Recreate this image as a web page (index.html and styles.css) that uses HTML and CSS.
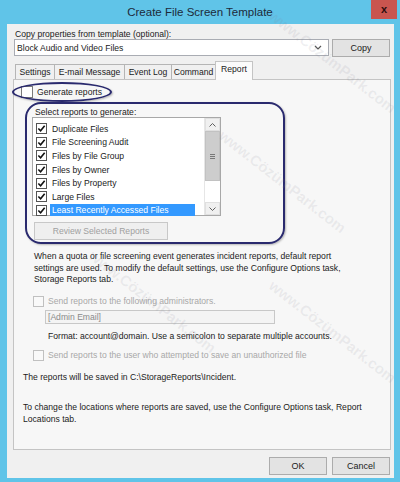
FILE: index.html
```html
<!DOCTYPE html>
<html>
<head>
<meta charset="utf-8">
<link rel="stylesheet" href="styles.css">
</head>
<body>
<div class="window">
  <div class="titlebar">
    <span></span>
    <span class="title">Create File Screen Template</span>
    <span class="close">x</span>
  </div>
  <div class="client">
    <div class="lbl">Copy properties from template (optional):</div>
    <div class="row-combo">
      <div class="combo">
        <span>Block Audio and Video Files</span>
        <svg class="chev" width="8" height="5" viewBox="0 0 8 5"><path d="M1 1 L4 4 L7 1" fill="none" stroke="#555" stroke-width="1.2"/></svg>
      </div>
      <div class="btn copy">Copy</div>
    </div>
    <div class="tabs">
      <div class="tab t1">Settings</div>
      <div class="tab t2">E-mail Message</div>
      <div class="tab t3">Event Log</div>
      <div class="tab t4">Command</div>
      <div class="tab sel">Report</div>
    </div>
    <div class="panel">
      <div class="chkrow gen">
        <span class="cb"></span><span>Generate reports</span>
      </div>
      <div class="group">
        <div class="glbl">Select reports to generate:</div>
        <div class="listbox">
          <div class="items">
            <div class="item"><span class="cb on"><svg viewBox="0 0 10 10"><path d="M1.5 5 L4 7.5 L8.5 2" fill="none" stroke="#111" stroke-width="1.8"/></svg></span><span class="it">Duplicate Files</span></div>
            <div class="item"><span class="cb on"><svg viewBox="0 0 10 10"><path d="M1.5 5 L4 7.5 L8.5 2" fill="none" stroke="#111" stroke-width="1.8"/></svg></span><span class="it">File Screening Audit</span></div>
            <div class="item"><span class="cb on"><svg viewBox="0 0 10 10"><path d="M1.5 5 L4 7.5 L8.5 2" fill="none" stroke="#111" stroke-width="1.8"/></svg></span><span class="it">Files by File Group</span></div>
            <div class="item"><span class="cb on"><svg viewBox="0 0 10 10"><path d="M1.5 5 L4 7.5 L8.5 2" fill="none" stroke="#111" stroke-width="1.8"/></svg></span><span class="it">Files by Owner</span></div>
            <div class="item"><span class="cb on"><svg viewBox="0 0 10 10"><path d="M1.5 5 L4 7.5 L8.5 2" fill="none" stroke="#111" stroke-width="1.8"/></svg></span><span class="it">Files by Property</span></div>
            <div class="item"><span class="cb on"><svg viewBox="0 0 10 10"><path d="M1.5 5 L4 7.5 L8.5 2" fill="none" stroke="#111" stroke-width="1.8"/></svg></span><span class="it">Large Files</span></div>
            <div class="item"><span class="cb on"><svg viewBox="0 0 10 10"><path d="M1.5 5 L4 7.5 L8.5 2" fill="none" stroke="#111" stroke-width="1.8"/></svg></span><span class="it hl">Least Recently Accessed Files</span></div>
          </div>
          <div class="scroll">
            <div class="sarrow"><svg width="7" height="4" viewBox="0 0 7 4"><path d="M0.5 3.5 L3.5 0.5 L6.5 3.5" fill="none" stroke="#606060" stroke-width="1"/></svg></div>
            <div class="thumb"><span class="grip"></span></div>
            <div class="track"></div>
            <div class="sarrow"><svg width="7" height="4" viewBox="0 0 7 4"><path d="M0.5 0.5 L3.5 3.5 L6.5 0.5" fill="none" stroke="#606060" stroke-width="1"/></svg></div>
          </div>
        </div>
        <div class="btn review">Review Selected Reports</div>
      </div>
      <p class="para">When a quota or file screening event generates incident reports, default report settings are used. To modify the default settings, use the Configure Options task, Storage Reports tab.</p>
      <div class="chkrow dis send1"><span class="cb"></span><span>Send reports to the following administrators.</span></div>
      <div class="input">[Admin Email]</div>
      <div class="fmt">Format: account@domain. Use a semicolon to separate multiple accounts.</div>
      <div class="chkrow dis send2"><span class="cb"></span><span>Send reports to the user who attempted to save an unauthorized file</span></div>
      <div class="saved">The reports will be saved in C:\StorageReports\Incident.</div>
      <div class="change">To change the locations where reports are saved, use the Configure Options task, Report Locations tab.</div>
    </div>
    <div class="footer">
      <div class="btn ok">OK</div>
      <div class="btn cancel">Cancel</div>
    </div>
  </div>
  <div class="mark ell"></div>
  <div class="mark box"></div>
  <div class="wm w1">www.CözümPark.com</div>
  <div class="wm w2">www.CözümPark.com</div>
  <div class="wm w3">www.CözümPark.com</div>
  <div class="wm w4">www.CözümPark.com</div>
</div>
</body>
</html>
```
FILE: styles.css
```css
* { box-sizing: border-box; }
html, body { margin: 0; padding: 0; }
body {
  width: 400px; height: 482px; overflow: hidden;
  font-family: "Liberation Sans", Arial, sans-serif;
  font-size: 8.6px; color: #1b1b1b;
  background: #60c4e8;
}
.window { position: relative; width: 400px; height: 482px; display: flex; flex-direction: column; overflow: hidden; }
.titlebar {
  height: 24px; display: grid; grid-template-columns: 1fr auto 1fr; align-items: start;
}
.title { font-size: 11.5px; color: #1d2a3a; padding-top: 6px; }
.close {
  justify-self: end; margin-right: 3px; width: 26px; height: 19px;
  background: #c9554f; color: #2b0d0d; font-weight: bold; font-size: 11px;
  display: flex; align-items: center; justify-content: center; padding-bottom: 2px;
}
.client {
  margin: 0 6px 0 7px; height: 454px; background: #f0f0f0;
  padding: 5px 3px 0 6px; display: flex; flex-direction: column;
}
.lbl { height: 10px; line-height: 10px; padding-left: 2px; }
.row-combo { display: flex; align-items: flex-start; gap: 3px; margin-left: 1px; }
.combo {
  width: 315px; height: 17px; background: #fff; border: 1px solid #a9acb3;
  display: flex; align-items: center; justify-content: space-between; padding: 0 6px 0 2px;
}
.btn {
  background: #e3e3e3; border: 1px solid #acacac; display: flex; align-items: center; justify-content: center;
}
.copy { width: 58px; height: 18px; font-size: 9px; }
.tabs { display: flex; align-items: flex-end; margin: 4px 0 0 2px; height: 18px; position: relative; z-index: 1; }
.tab {
  height: 15px; border: 1px solid #b5b5b5; border-bottom: none; margin-right: -1px;
  background: #f0f0f0; display: flex; align-items: center; justify-content: center;
}
.t1 { width: 40px; } .t2 { width: 71px; } .t3 { width: 48px; } .t4 { width: 45px; }
.sel { width: 38px; background: #fbfbfb; align-items: flex-start; padding-top: 2px; margin-bottom: -1px; height: 19px; border-color: #c4c4c4; }
.panel {
  width: 378px; height: 371px; border: 1px solid #c4c4c4; background: #f7f7f7;
  display: flex; flex-direction: column;
}
.cb {
  width: 11px; height: 11px; border: 1px solid #7a7a7a; background: #fff; flex: none; display: inline-block;
}
.cb svg { display: block; width: 9px; height: 9px; }
.chkrow { display: flex; align-items: center; gap: 4px; white-space: nowrap; }
.gen { margin: 6px 0 0 7px; height: 12px; }
.gen .cb { width: 12px; height: 12px; }
.group { margin: 9px 0 0 18px; }
.glbl { padding-left: 3px; height: 10px; line-height: 10px; }
.listbox {
  width: 189px; height: 99px; background: #fff; border: 1px solid #a8a8a8; margin-top: 0;
  display: flex;
}
.items { flex: 1; padding: 4px 0 0 3px; }
.item { display: flex; align-items: center; height: 13.6px; gap: 3px; white-space: nowrap; }
.item .cb { width: 11px; height: 11px; border-color: #555; display: flex; align-items: center; justify-content: center; }
.it { padding: 1px 2px; line-height: 10px; }
.hl { background: #3399ff; color: #fff; width: 145px; }
.scroll { width: 16px; display: flex; flex-direction: column; border-left: 1px solid #e6e6e6; background: #fff; }
.sarrow { height: 13px; background: #f0f0f0; display: flex; align-items: center; justify-content: center; border: 1px solid #e0e0e0; }
.thumb { height: 50px; background: #cdcdcd; border: 1px solid #c2c2c2; display: flex; align-items: center; justify-content: center; }
.grip { width: 5px; height: 5px; border-top: 1px solid #777; border-bottom: 1px solid #777; position: relative; }
.grip::after { content: ""; position: absolute; left: 0; right: 0; top: 1px; border-top: 1px solid #777; }
.track { flex: 1; background: #fff; }
.review { width: 134px; height: 18px; margin: 6px 0 0 2px; color: #a0a0a0; background: #efefef; border-color: #c8c8c8; }
.para { margin: 11px 0 0 20px; width: 317px; line-height: 11.5px; }
.dis { color: #a8a8a8; }
.dis .cb { border-color: #c0c0c0; background: #f9f9f9; }
.send1 { margin: 10px 0 0 19px; height: 11px; }
.input {
  margin: 3px 0 0 31px; width: 230px; height: 14px; border: 1px solid #c8c8c8; background: #f4f4f4;
  color: #8a8a8a; padding-left: 2px; line-height: 12px;
}
.fmt { margin: 7px 0 0 34px; height: 10px; line-height: 10px; white-space: nowrap; }
.send2 { margin: 9px 0 0 19px; height: 11px; }
.saved { margin: 11px 0 0 9px; line-height: 11px; }
.change { margin: 18px 0 0 9px; width: 345px; line-height: 12px; }
.footer { display: flex; justify-content: flex-end; gap: 5px; margin-top: 7px; padding-right: 1px; }
.ok, .cancel { width: 58px; height: 18px; font-size: 9px; }
.mark { position: absolute; border: 2px solid #2a2a6e; pointer-events: none; box-shadow: 1px 1px 2px rgba(0,0,0,0.25); }
.ell { left: 12px; top: 82px; width: 100px; height: 20px; border-radius: 50%; }
.box { left: 25px; top: 102px; width: 260px; height: 142px; border-radius: 16px; }
.wm { position: absolute; width: 150px; height: 18px; color: rgba(130,130,150,0.12); font-size: 15px; font-weight: bold; transform: rotate(38deg); white-space: nowrap; pointer-events: none; }
.w1 { left: 255px; top: 51px; }
.w2 { left: 205px; top: 171px; }
.w3 { left: 255px; top: 321px; }
.w4 { left: 75px; top: 291px; }
```
